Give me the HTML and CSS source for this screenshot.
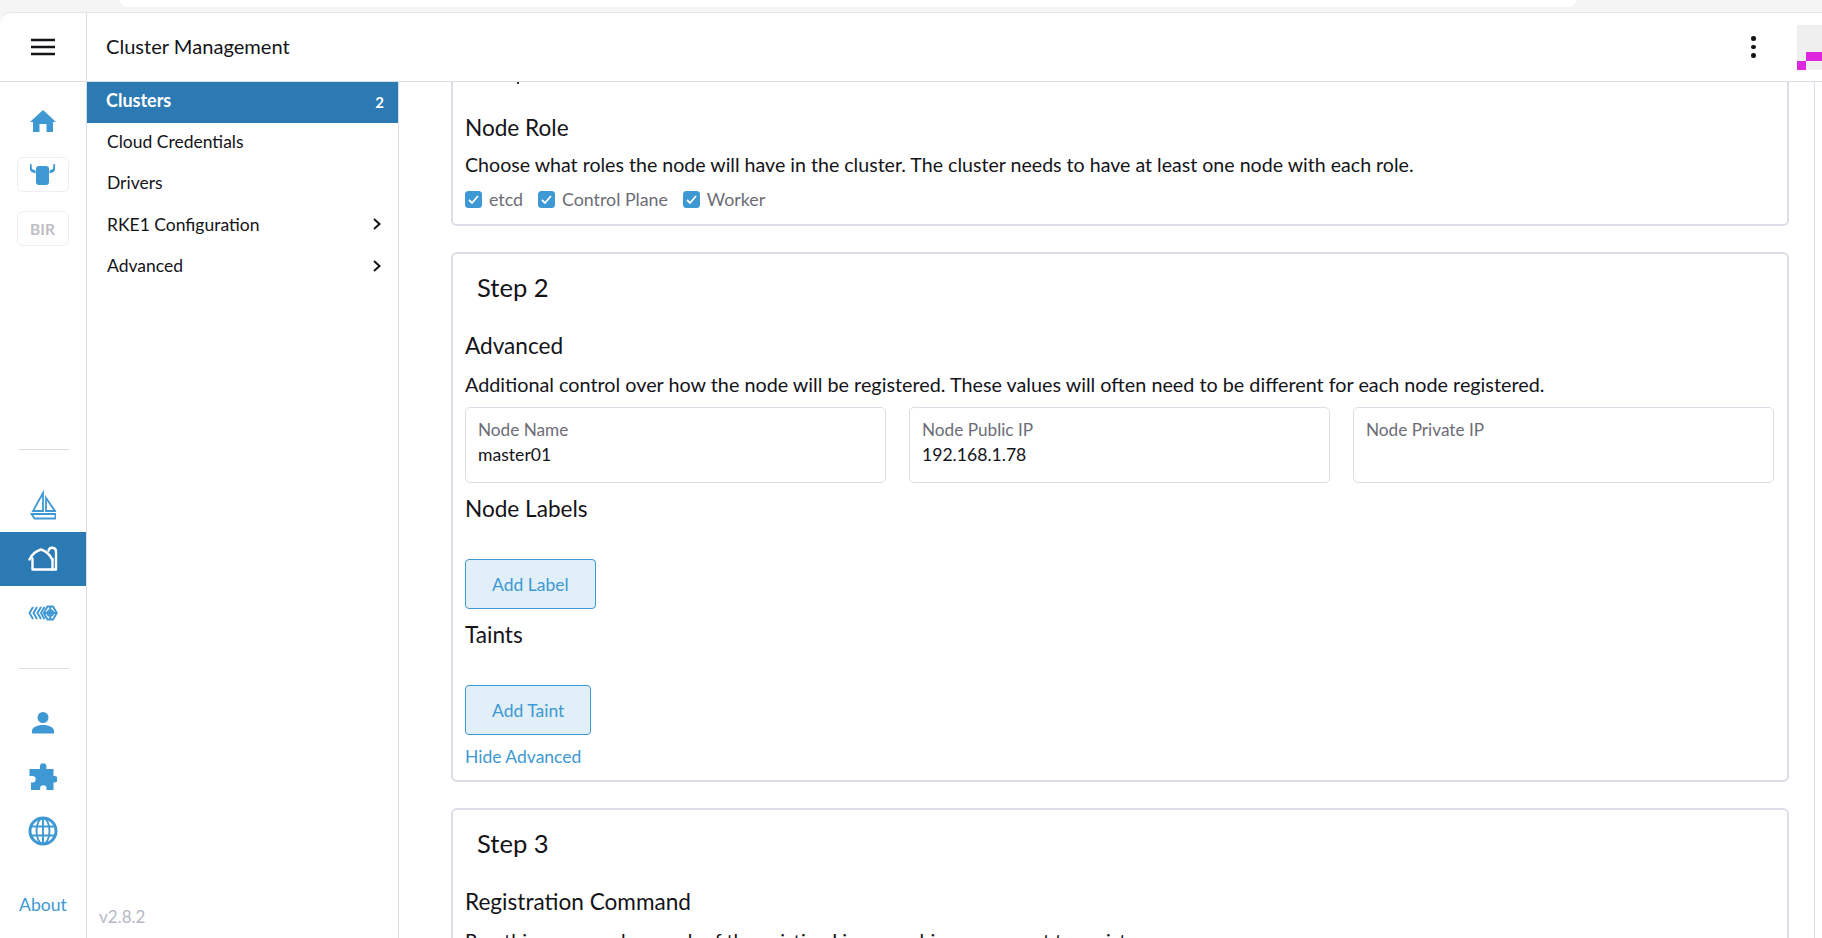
FILE: index.html
```html
<!DOCTYPE html>
<html lang="en">
<head>
<meta charset="utf-8">
<title>Cluster Management</title>
<link rel="stylesheet" href="styles.css">
</head>
<body>
<div class="browser-strip"><div class="omnibox"></div></div>
<div class="app">
  <header class="topbar">
    <div class="menu-cell">
      <svg class="hamburger" width="24" height="18" viewBox="0 0 24 18"><path d="M0 2h24M0 9h24M0 16h24" stroke="#141419" stroke-width="2.600" fill="none"/></svg>
    </div>
    <div class="page-title">Cluster Management</div>
    <div class="kebab"><span></span><span></span><span></span></div>
    <svg class="avatar" width="45" height="45" viewBox="0 0 45 45">
      <rect width="45" height="45" fill="#efefef"/>
      <rect x="9" y="27" width="36" height="9" fill="#dd26dd"/>
      <rect x="0" y="36" width="9" height="9" fill="#dd26dd"/>
    </svg>
  </header>
  <div class="workspace">
    <nav class="rail">
      <div class="rail-top">
        <div class="rail-item">
          <svg width="26" height="22" viewBox="0 0 26 22"><path class="ic-fill" d="M13 0 26 12h-3v10h-6.500v-8h-7v8H3V12H0Z"/></svg>
        </div>
        <div class="rail-badge">
          <svg width="25" height="21" viewBox="0 0 25 21"><path class="ic-fill" d="M9 2h7a3 3 0 0 1 3 3v13a3 3 0 0 1-3 3H9a3 3 0 0 1-3-3V5a3 3 0 0 1 3-3ZM0 0h1.500L2 5l3.500 1.500v3L1.500 8 0 6ZM25 0h-1.500L23 5l-3.500 1.500v3L23.500 8 25 6Z"/></svg>
        </div>
        <div class="rail-badge rail-badge-text">BIR</div>
      </div>
      <div class="rail-rule rail-rule-a"></div>
      <div class="rail-item">
        <svg width="26" height="30" viewBox="0 0 26 30"><g class="ic-line ic-sail"><path d="M13 3 3 21h10ZM16 8v13h9Z"/><path d="M1.500 24h24v4.500H4.500Z"/></g></svg>
      </div>
      <div class="rail-item rail-item-active">
        <svg width="30" height="26" viewBox="0 0 30 26"><g class="ic-white"><path d="M1.500 13.500C4 8 8 5 13 3.500 18 5 22 8.500 24.500 14"/><path d="M4.500 12.500v11H28V5.500a3.800 3.800 0 0 0-7.500-.8"/><path d="M24.500 13v10.500"/></g></svg>
      </div>
      <div class="rail-item">
        <svg width="30" height="16" viewBox="0 0 30 16"><g class="ic-line ic-thick"><path d="M5 2 1.500 8 5 14M9 2 5.500 8 9 14M13 2 9.500 8l3.500 6M16.500 2 13 8l3.500 6"/><path d="M19.500 1.500h5.500l3.800 6.500-3.800 6.500h-5.500L15.800 8Z"/><circle cx="22.300" cy="8" r="2.800"/><path d="M22.300 1.500v13M16 8h12.500"/></g></svg>
      </div>
      <div class="rail-rule rail-rule-b"></div>
      <div class="rail-item">
        <svg width="22" height="22" viewBox="0 0 22 22"><path class="ic-fill" d="M11 0a5.500 5.500 0 1 1 0 11 5.500 5.500 0 0 1 0-11ZM0 21.500v-2.500c0-3.500 5-6 11-6s11 2.500 11 6v2.500Z"/></svg>
      </div>
      <div class="rail-item">
        <svg width="28" height="28" viewBox="0 0 28 28"><path class="ic-fill" d="M11 3.500a3.200 3.200 0 0 1 6.400 0V6h7.100v7h1a3.200 3.200 0 0 1 0 6.400h-1V27H17.500v-1.500a3.200 3.200 0 0 0-6.400 0V27H2V19.500h1.500a3.200 3.200 0 0 0 0-6.400H.5V6H11Z"/></svg>
      </div>
      <div class="rail-item">
        <svg width="30" height="30" viewBox="0 0 30 30"><circle cx="15" cy="15" r="13" fill="none" stroke="#3d98d3" stroke-width="3"/><g class="ic-line ic-thick"><ellipse cx="15" cy="15" rx="6.500" ry="13"/><path d="M15 2v26M2.500 10.500h25M2.500 19.500h25"/></g></svg>
      </div>
      <a class="about">About</a>
    </nav>
    <aside class="sidenav">
      <ul class="side-list">
        <li class="side-item side-item-active"><span>Clusters</span><span class="count">2</span></li>
        <li class="side-item"><span>Cloud Credentials</span></li>
        <li class="side-item"><span>Drivers</span></li>
        <li class="side-item"><span>RKE1 Configuration</span>
          <svg class="chev" width="10" height="14" viewBox="0 0 10 14"><path d="M2 2l5.500 5L2 12" fill="none" stroke="#141419" stroke-width="2"/></svg></li>
        <li class="side-item"><span>Advanced</span>
          <svg class="chev" width="10" height="14" viewBox="0 0 10 14"><path d="M2 2l5.500 5L2 12" fill="none" stroke="#141419" stroke-width="2"/></svg></li>
      </ul>
      <div class="version">v2.8.2</div>
    </aside>
    <main class="main">
      <section class="card card-cut">
        <div class="tip"></div>
        <h3 class="sub sub-first">Node Role</h3>
        <p class="desc desc-first">Choose what roles the node will have in the cluster. The cluster needs to have at least one node with each role.</p>
        <div class="checks">
          <label class="check"><svg width="17" height="17" viewBox="0 0 17 17"><rect width="17" height="17" rx="3.500" fill="#3d98d3"/><path d="M4 9l3 3 6-7" fill="none" stroke="#fff" stroke-width="1.800"/></svg>etcd</label>
          <label class="check"><svg width="17" height="17" viewBox="0 0 17 17"><rect width="17" height="17" rx="3.500" fill="#3d98d3"/><path d="M4 9l3 3 6-7" fill="none" stroke="#fff" stroke-width="1.800"/></svg>Control Plane</label>
          <label class="check"><svg width="17" height="17" viewBox="0 0 17 17"><rect width="17" height="17" rx="3.500" fill="#3d98d3"/><path d="M4 9l3 3 6-7" fill="none" stroke="#fff" stroke-width="1.800"/></svg>Worker</label>
        </div>
      </section>
      <section class="card">
        <h2 class="step">Step 2</h2>
        <h3 class="sub">Advanced</h3>
        <p class="desc desc-wide">Additional control over how the node will be registered. These values will often need to be different for each node registered.</p>
        <div class="fields">
          <div class="field"><div class="field-label">Node Name</div><div class="field-value">master01</div></div>
          <div class="field"><div class="field-label">Node Public IP</div><div class="field-value">192.168.1.78</div></div>
          <div class="field"><div class="field-label">Node Private IP</div><div class="field-value"></div></div>
        </div>
        <h3 class="sub sub-kv">Node Labels</h3>
        <button class="btn">Add Label</button>
        <h3 class="sub sub-kv">Taints</h3>
        <button class="btn">Add Taint</button>
        <a class="link">Hide Advanced</a>
      </section>
      <section class="card card-last">
        <h2 class="step">Step 3</h2>
        <h3 class="sub">Registration Command</h3>
        <p class="desc desc-wide">Run this command on each of the existing Linux machines you want to register.</p>
      </section>
    </main>
    <div class="edge"></div>
  </div>
</div>
</body>
</html>
```
FILE: styles.css
```css
* { box-sizing: border-box; }
html, body { margin: 0; height: 100%; overflow: hidden; }
body { background: #f5f5f5; font-family: Lato, "Open Sans", sans-serif; font-size: 17.500px; color: #141419; }

.browser-strip { height: 12px; background: #f5f5f5; }
.omnibox { margin-left: 120px; width: 1456px; height: 7px; background: #fff; border-radius: 0 0 14px 14px; }

.app { height: 926px; background: #fff; border-top: 1px solid #e6e6e6; border-top-left-radius: 12px; overflow: hidden; display: flex; flex-direction: column; }

.topbar { height: 69px; flex: none; display: flex; align-items: center; border-bottom: 1px solid #dcdee7; overflow: hidden; }
.menu-cell { width: 87px; height: 100%; flex: none; display: flex; align-items: center; justify-content: center; border-right: 1px solid #dcdee7; }
.hamburger { margin-right: 1px; }
.page-title { margin-left: 19px; padding-bottom: 3px; font-size: 20.100px; flex: 1; }
.kebab { display: flex; flex-direction: column; gap: 4px; width: 5px; margin-right: 41px; }
.kebab span { width: 4.500px; height: 4.500px; border-radius: 50%; background: #141419; }
.avatar { flex: none; margin-right: -20px; }

.workspace { flex: 1; display: flex; min-height: 0; }

.rail { width: 87px; flex: none; border-right: 1px solid #dcdee7; display: flex; flex-direction: column; align-items: stretch; }
.rail-top { flex: 1; padding-top: 12px; display: flex; flex-direction: column; align-items: center; }
.rail-item { height: 54px; flex: none; display: flex; align-items: center; justify-content: center; }
.rail-item-active { background: #2b7ab3; }
.rail-badge { width: 52px; height: 35px; flex: none; margin: 9px 0 19px -1px; border: 1px solid #eeeef2; border-radius: 6px; display: flex; align-items: center; justify-content: center; }
.rail-badge + .rail-badge { margin-top: 0; }
.rail-badge-text { color: #bdbdc2; font-weight: 700; font-size: 15.500px; }
.rail-rule { height: 1px; flex: none; margin-left: 19px; margin-right: 17px; background: #dcdee7; }
.rail-rule-a { margin-bottom: 28px; }
.rail-rule-b { margin-top: 28px; margin-bottom: 27px; }
.about { margin: 36px 0 22px; line-height: 22px; text-align: center; color: #3d98d3; font-size: 17.600px; }

.ic-fill { fill: #3d98d3; }
.ic-line { fill: none; stroke: #3d98d3; stroke-width: 2; }
.ic-sail { stroke-width: 1.800; }
.ic-thick { stroke-width: 1.900; }
.ic-white { fill: none; stroke: #fff; stroke-width: 2.400; stroke-linejoin: round; stroke-linecap: round; }

.sidenav { width: 312px; flex: none; border-right: 1px solid #dcdee7; display: flex; flex-direction: column; }
.side-list { list-style: none; margin: 0; padding: 0; flex: 1; }
.side-item { height: 41.300px; padding: 0 16px 0 20px; display: flex; align-items: center; justify-content: space-between; }
.side-item-active { background: #2b7ab3; color: #fff; font-weight: 700; font-size: 18px; height: 41px; padding: 0 14px 6px 19px; margin-bottom: -2px; }
.count { font-size: 15px; padding-top: 4px; }
.version { padding: 0 0 10px 12px; line-height: 22px; color: #b6b8c8; font-size: 17px; }

.main { flex: 1; min-width: 0; padding: 0 25px 0 52px; overflow: hidden; }
.edge { width: 8px; flex: none; border-left: 1px solid #dcdee7; }

.card { border: 2px solid #dcdee7; border-radius: 6px; padding: 0 13px 10px 12px; margin-bottom: 26px; }
.card-cut { border-top: 0; border-top-left-radius: 0; border-top-right-radius: 0; height: 144px; }
.card-last { border-bottom: 0; margin-bottom: 0; height: 300px; }
.tip { width: 2px; height: 2px; margin-left: 52px; background: #333; }

.step { margin: 0; padding: 17px 0 0 12px; font-size: 25.600px; line-height: 32px; font-weight: 400; }
.sub { margin: 30px 0 0; font-size: 22.600px; line-height: 26px; font-weight: 400; }
.sub-first { margin-top: 31px; }
.sub-kv { margin-top: 13px; }
.desc { margin: 12px 0 0; font-size: 19.600px; line-height: 26px; }
.desc-first { margin-top: 11px; }
.desc-wide { font-size: 19.800px; }

.checks { display: flex; gap: 15px; margin-top: 11px; color: #6c6c76; line-height: 20px; font-size: 17.800px; }
.check { display: flex; align-items: center; gap: 7px; }

.fields { display: grid; grid-template-columns: repeat(3, 1fr); gap: 23px; margin-top: 10px; }
.field { height: 76px; border: 1px solid #dcdee7; border-radius: 5px; padding: 9px 12px 0; line-height: 25px; }
.field-label { color: #6c6c76; font-size: 17.200px; }
.field-value { color: #141419; font-size: 17.600px; }

.btn { display: block; height: 50px; margin-top: 37px; padding: 0 26px; background: #e1f0f8; border: 1px solid #3d98d3; border-radius: 4px; color: #3d98d3; font: inherit; font-size: 17.500px; }
.link { display: block; margin-top: 9px; line-height: 26px; color: #3d98d3; font-size: 17.500px; }
```
